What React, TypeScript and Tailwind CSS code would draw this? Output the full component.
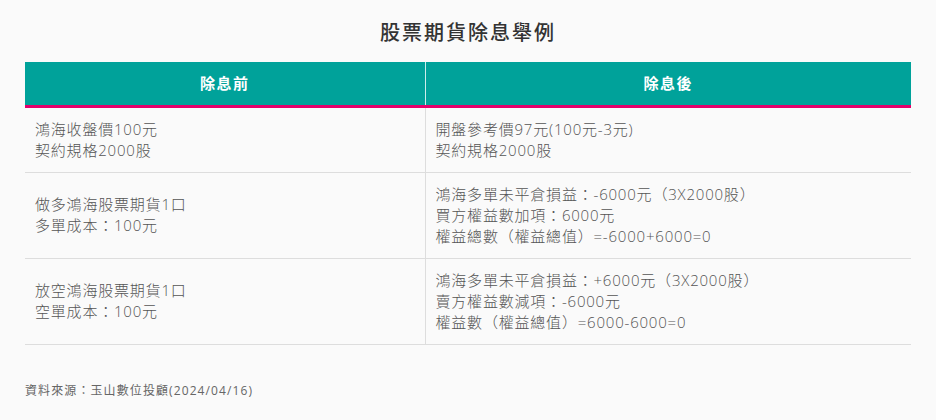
export default function App() {
  const rows = [
    {
      before: ["鴻海收盤價100元", "契約規格2000股"],
      after: ["開盤參考價97元(100元-3元)", "契約規格2000股"],
    },
    {
      before: ["做多鴻海股票期貨1口", "多單成本：100元"],
      after: [
        "鴻海多單未平倉損益：-6000元（3X2000股）",
        "買方權益數加項：6000元",
        "權益總數（權益總值）=-6000+6000=0",
      ],
    },
    {
      before: ["放空鴻海股票期貨1口", "空單成本：100元"],
      after: [
        "鴻海多單未平倉損益：+6000元（3X2000股）",
        "賣方權益數減項：-6000元",
        "權益數（權益總值）=6000-6000=0",
      ],
    },
  ];

  return (
    <div
      className="w-[936px] h-[420px] bg-[#fafafa] px-[25px] pt-[20px]"
      style={{ fontFamily: '"Open Sans", "Noto Sans CJK TC", sans-serif' }}
    >
      <h2 className="text-center text-[20px] leading-[26px] font-medium tracking-[2px] text-[#333]">股票期貨除息舉例</h2>
      <table className="w-[886px] mt-[16px] border-collapse">
        <thead>
          <tr className="bg-[#00a29a] text-white border-b-[3px] border-[#e4006b]">
            <th className="w-[400px] h-[44px] text-[15px] tracking-[1.5px] font-bold border-r border-white/80">除息前</th>
            <th className="h-[44px] text-[15px] tracking-[1.5px] font-bold">除息後</th>
          </tr>
        </thead>
        <tbody className="text-[15px] leading-[21px] tracking-[0.8px] font-light text-[#555]">
          {rows.map((row, i) => (
            <tr key={i} className="border-b border-[#dddddd]">
              <td className="px-[10px] py-[11px] align-middle border-r border-[#dddddd]">
                {row.before.map((t) => (
                  <div key={t}>{t}</div>
                ))}
              </td>
              <td className="px-[10px] py-[11px] align-middle">
                {row.after.map((t) => (
                  <div key={t}>{t}</div>
                ))}
              </td>
            </tr>
          ))}
        </tbody>
      </table>
      <p className="mt-[38px] text-[12px] leading-[16px] tracking-[1.1px] text-[#666]">資料來源：玉山數位投顧(2024/04/16)</p>
    </div>
  );
}
